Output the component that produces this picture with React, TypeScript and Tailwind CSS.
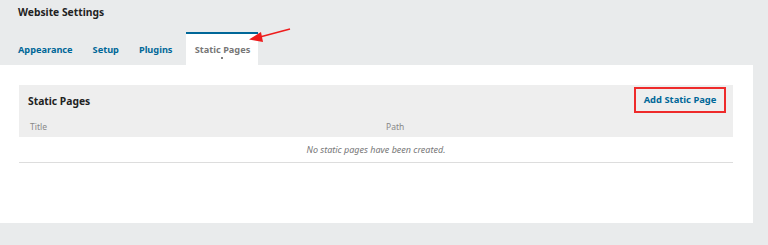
export default function App() {
  const tabs = ["Appearance", "Setup", "Plugins"];

  return (
    <div className="relative h-[245px] w-[768px] overflow-hidden bg-[#e9ebec] font-['Noto_Sans',sans-serif]">
      <div className="h-[32px] pl-[18px] pt-[2px] text-[10.3px] font-bold leading-[20px] text-[#222]">
        Website Settings
      </div>

      <div className="flex h-[33px] items-end pl-[8px]">
        {tabs.map((t) => (
          <div
            key={t}
            className="flex h-[31px] items-center px-[10px] text-[9.2px] font-bold text-[#006798]"
          >
            {t}
          </div>
        ))}
        <div className="relative ml-[4px] flex h-[33px] w-[72px] items-center justify-center border-t-2 border-[#006798] bg-white text-[9.2px] font-bold text-[#777]">
          Static Pages
          <span className="absolute bottom-[6px] left-[35px] h-[2px] w-[2px] rounded-full bg-[#555]" />
        </div>
      </div>

      <div className="h-[158px] w-[753px] bg-white pl-[19px] pt-[20px]">
        <div className="w-[714px] border-b border-[#ddd]">
          <div className="bg-[#eee]">
            <div className="flex h-[32px] items-start justify-between pl-[9px] pr-[7px]">
              <div className="pt-[7px] text-[10.3px] font-bold leading-[18px] text-[#222]">
                Static Pages
              </div>
              <button className="mt-[2px] h-[26px] w-[92px] border-2 border-[#ee2a2a] text-[9.4px] font-bold text-[#006798]">
                Add Static Page
              </button>
            </div>
            <div className="grid h-[20px] grid-cols-2 items-center px-[10px] text-[8.5px] text-[#888]">
              <div className="pl-[1px]">Title</div>
              <div className="pl-[10px]">Path</div>
            </div>
          </div>
          <div className="flex h-[25px] items-center justify-center text-[9px] italic text-[#777]">
            No static pages have been created.
          </div>
        </div>
      </div>

      <svg
        className="absolute left-[244px] top-[24px]"
        width="52"
        height="22"
        viewBox="0 0 52 22"
      >
        <line x1="46" y1="5" x2="14" y2="13.5" stroke="#ee1c1c" strokeWidth="1.5" />
        <polygon points="5,15.5 17,8 19,18" fill="#ee1c1c" />
      </svg>
    </div>
  );
}
